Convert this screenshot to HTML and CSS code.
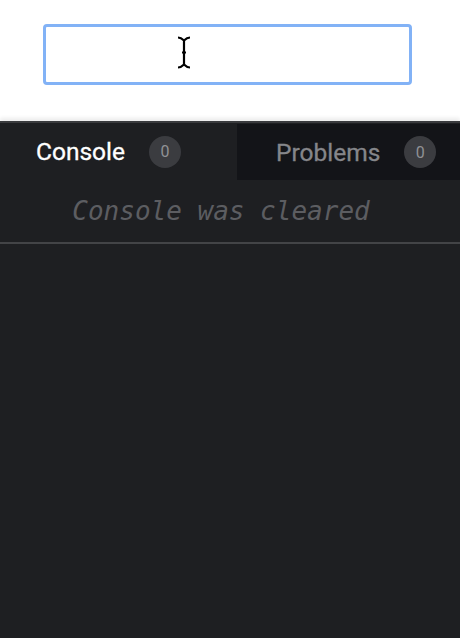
FILE: index.html
```html
<!DOCTYPE html>
<html>
<head>
<meta charset="utf-8">
<link rel="stylesheet" href="styles.css">
</head>
<body>
<div class="top">
  <div class="field">
    <input class="input" type="text">
    <svg class="ibeam" width="16" height="33" viewBox="0 0 16 33">
      <path d="M2 1.5 Q5 1.5 8 4.5 Q11 1.5 14 1.5 M8 4.5 V28.5 M2 31.5 Q5 31.5 8 28.5 Q11 31.5 14 31.5 M6 16.5 H10" fill="none" stroke="#000" stroke-width="2.2"/>
    </svg>
  </div>
</div>
<div class="panel">
  <div class="tabs">
    <div class="tab tab-active"><span class="tab-label">Console</span><span class="badge">0</span></div>
    <div class="tab tab-inactive"><span class="tab-label">Problems</span><span class="badge">0</span></div>
  </div>
  <div class="message">Console was cleared</div>
  <div class="divider"></div>
</div>
</body>
</html>
```
FILE: styles.css
```css
html, body {
  margin: 0;
  padding: 0;
  height: 100%;
}
body {
  background: #ffffff;
  display: flex;
  flex-direction: column;
  font-family: Roboto, "Liberation Sans", sans-serif;
  overflow: hidden;
}
.top {
  height: 121px;
  flex: none;
  padding: 24px 0 0 43px;
  box-sizing: border-box;
}
.field {
  position: relative;
  width: 369px;
  height: 61px;
}
.input {
  width: 100%;
  height: 100%;
  box-sizing: border-box;
  border: 3px solid #82b2f6;
  border-radius: 4px;
  outline: none;
  background: #fff;
  margin: 0;
  padding: 0;
}
.ibeam {
  position: absolute;
  left: 133px;
  top: 12px;
}
.panel {
  flex: 1;
  background: #1e1f22;
  border-top: 2px solid #3a3b3e;
  box-shadow: 0 -3px 4px rgba(0,0,0,0.08);
  display: flex;
  flex-direction: column;
}
.tabs {
  display: flex;
  height: 57px;
  flex: none;
}
.tab {
  display: flex;
  align-items: center;
  box-sizing: border-box;
  height: 100%;
}
.tab-active {
  width: 237px;
  padding-left: 36px;
  color: #ffffff;
}
.tab-inactive {
  flex: 1;
  margin-top: 1px;
  height: 56px;
  padding-left: 39px;
  background: #131418;
  color: #85868a;
}
.tab-label {
  font-size: 24.5px;
  font-weight: 400;
  -webkit-text-stroke: 0.3px currentColor;
  line-height: 1;
  margin-right: 24px;
  position: relative;
  top: 1px;
}
.badge {
  width: 32px;
  height: 32px;
  border-radius: 50%;
  background: #3b3c40;
  color: #909195;
  font-size: 16px;
  display: flex;
  align-items: center;
  justify-content: center;
}
.message {
  height: 62px;
  display: flex;
  align-items: center;
  justify-content: center;
  font-family: "DejaVu Sans Mono", monospace;
  font-style: italic;
  font-size: 26px;
  color: #5c5d61;
  padding-right: 18px;
}
.divider {
  height: 2px;
  background: #434447;
}
```
